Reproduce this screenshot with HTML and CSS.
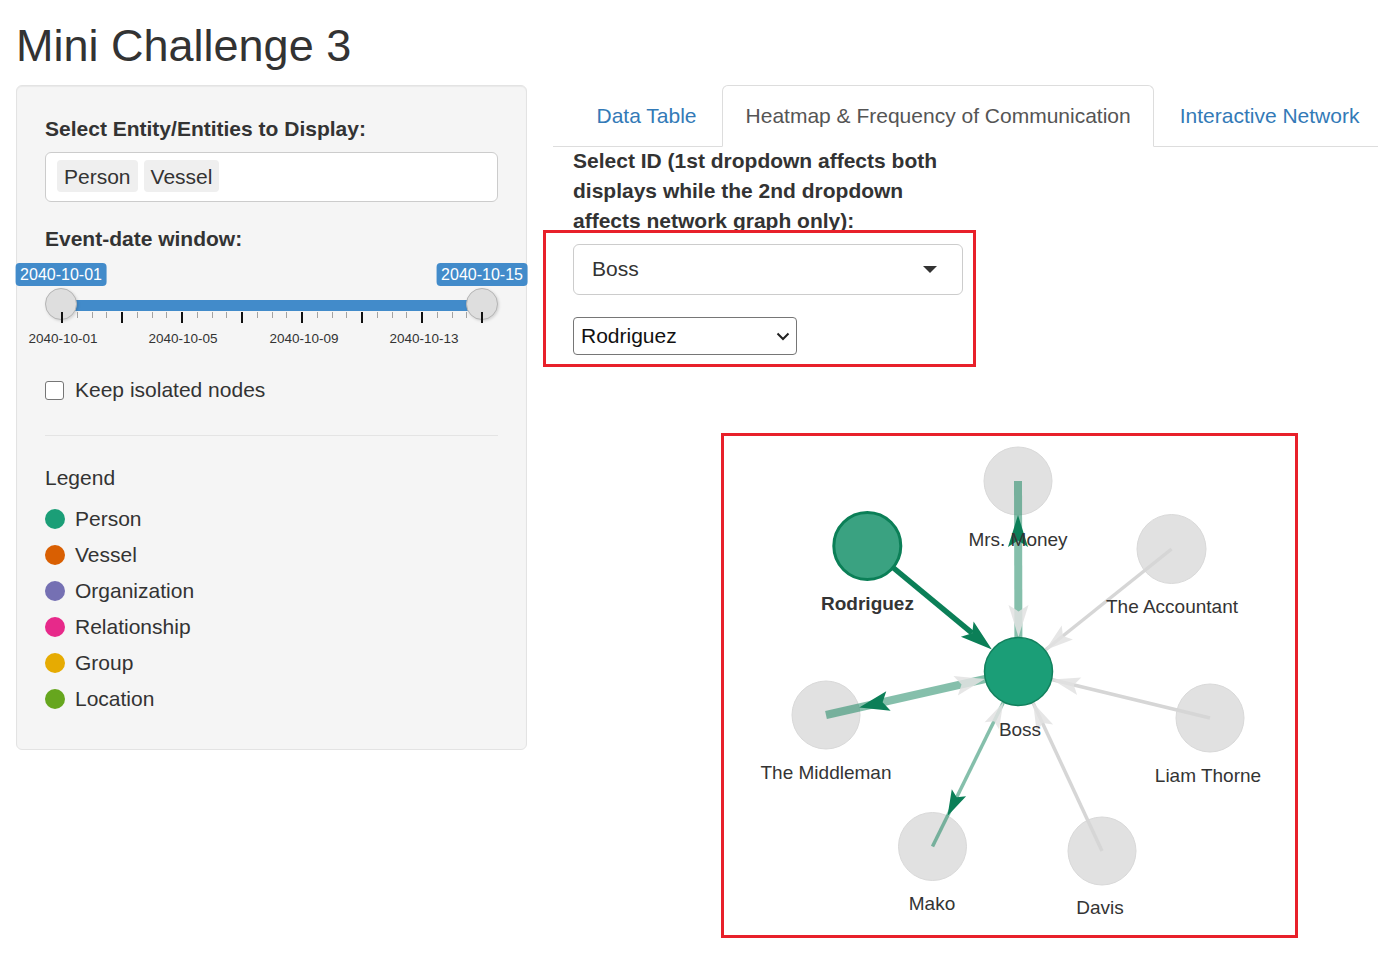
FILE: index.html
```html
<!DOCTYPE html>
<html lang="en">
<head>
<meta charset="utf-8">
<title>Mini Challenge 3</title>
<link rel="stylesheet" href="styles.css">
</head>
<body>
<div class="page">
  <h2 class="title">Mini Challenge 3</h2>
  <div class="layout">
    <aside class="well">
      <div class="form-group">
        <label class="control-label">Select Entity/Entities to Display:</label>
        <div class="multi-input"><span class="chip">Person</span><span class="chip">Vessel</span></div>
      </div>
      <div class="form-group slider-group">
        <label class="control-label">Event-date window:</label>
        <div class="slider">
          <div class="bar"></div>
          <span class="handle handle-from"></span>
          <span class="handle handle-to"></span>
          <span class="tip tip-from">2040-10-01</span>
          <span class="tip tip-to">2040-10-15</span>
          <div class="ticks">
            <i class="tick major"></i><i class="tick"></i><i class="tick"></i><i class="tick"></i>
            <i class="tick major"></i><i class="tick"></i><i class="tick"></i><i class="tick"></i>
            <i class="tick major"></i><i class="tick"></i><i class="tick"></i><i class="tick"></i>
            <i class="tick major"></i><i class="tick"></i><i class="tick"></i><i class="tick"></i>
            <i class="tick major"></i><i class="tick"></i><i class="tick"></i><i class="tick"></i>
            <i class="tick major"></i><i class="tick"></i><i class="tick"></i><i class="tick"></i>
            <i class="tick major"></i><i class="tick"></i><i class="tick"></i><i class="tick"></i>
            <i class="tick major"></i>
          </div>
          <span class="grid-label g1">2040-10-01</span>
          <span class="grid-label g2">2040-10-05</span>
          <span class="grid-label g3">2040-10-09</span>
          <span class="grid-label g4">2040-10-13</span>
        </div>
      </div>
      <label class="check"><span class="check-box"></span>Keep isolated nodes</label>
      <hr class="divider">
      <div class="legend-title">Legend</div>
      <ul class="legend">
        <li><span class="dot person"></span>Person</li>
        <li><span class="dot vessel"></span>Vessel</li>
        <li><span class="dot org"></span>Organization</li>
        <li><span class="dot rel"></span>Relationship</li>
        <li><span class="dot group"></span>Group</li>
        <li><span class="dot location"></span>Location</li>
      </ul>
    </aside>
    <main class="main">
      <ul class="tabs">
        <li><a>Data Table</a></li>
        <li class="active"><a>Heatmap &amp; Frequency of Communication</a></li>
        <li><a>Interactive Network</a></li>
      </ul>
      <div class="tab-content">
        <div class="id-group">
          <label class="control-label">Select ID (1st dropdown affects both displays while the 2nd dropdown affects network graph only):</label>
          <div class="selectize-single">Boss<span class="caret"></span></div>
        </div>
        <div class="native-select"><span>Rodriguez</span>
          <svg class="chev" width="14" height="9" viewBox="0 0 14 9"><polyline points="1.5,1.5 7,7 12.5,1.5" fill="none" stroke="#222" stroke-width="2"/></svg>
        </div>
        <div class="annot"></div>
        <div class="network">
          <svg width="571" height="499" viewBox="724 437 571 499">
            <g class="grey-nodes" fill="#e1e1e1" stroke="#d9d9d9" stroke-width="1">
              <circle cx="1018" cy="482" r="34"/>
              <circle cx="1171.5" cy="550" r="34.5"/>
              <circle cx="826" cy="716" r="34"/>
              <circle cx="1210" cy="719" r="34"/>
              <circle cx="932.5" cy="847.5" r="34"/>
              <circle cx="1102" cy="852" r="34"/>
            </g>
            <g stroke="#d6d6d6" stroke-width="3.5">
              <line x1="1171.5" y1="550" x2="1018.5" y2="672.5"/>
              <line x1="1210" y1="719" x2="1018.5" y2="672.5"/>
              <line x1="1102" y1="852" x2="1018.5" y2="672.5"/>
            </g>
            <g stroke="#0c7f58" stroke-opacity="0.5">
              <line x1="1018.5" y1="672.5" x2="1018" y2="482" stroke-width="8"/>
              <line x1="1018.5" y1="672.5" x2="826" y2="716" stroke-width="8"/>
              <line x1="1018.5" y1="672.5" x2="932.5" y2="847.5" stroke-width="3.5"/>
            </g>
            <g fill="#e2e2e2" fill-opacity="0.85">
              <polygon points="1018.5,638 1008.5,606 1018.5,612.4 1028.5,606"/>
              <polygon points="984.9,680.1 957.85,696.45 961.5,685.4 953.45,676.95"/>
              <polygon points="1003.3,703.5 999,730.3 994.1,722.2 984.6,723.3"/>
              <polygon points="1045.4,650.9 1061.7,626.4 1062.9,636.9 1072.9,640.4"/>
              <polygon points="1052,680.6 1081.3,678.5 1073.8,685.9 1077.1,695.9"/>
              <polygon points="1033.1,703.8 1053.1,725.4 1042.6,724.1 1036.7,733"/>
            </g>
            <g fill="#0c7f58">
              <polygon points="1018,516 1008,548 1018,541.6 1028,548"/>
              <polygon points="859.2,708.5 886.25,692.15 882.6,703.2 890.65,711.65"/>
              <polygon points="947.5,817 951.8,790.2 956.7,798.3 966.1,797.2"/>
            </g>
            <circle cx="1018.5" cy="672.5" r="34" fill="#1b9e77" stroke="#12805d" stroke-width="1.5"/>
            <line x1="867" y1="547" x2="972.2" y2="634.2" stroke="#0b7f57" stroke-width="5.5"/>
            <polygon points="991.9,650.5 960.9,637.8 972.2,634.2 973.6,622.4" fill="#0b7f57"/>
            <circle cx="867.3" cy="547" r="33.5" fill="#3aa281" stroke="#0b7f57" stroke-width="3"/>
            <g class="labels">
              <text x="1018" y="547">Mrs. Money</text>
              <text x="867.5" y="611" class="bold">Rodriguez</text>
              <text x="1172" y="614">The Accountant</text>
              <text x="1020" y="737">Boss</text>
              <text x="826" y="780">The Middleman</text>
              <text x="1208" y="783">Liam Thorne</text>
              <text x="932" y="911">Mako</text>
              <text x="1100" y="915">Davis</text>
            </g>
          </svg>
        </div>
      </div>
    </main>
  </div>
</div>
</body>
</html>
```
FILE: styles.css
```css
html, body {
  margin: 0;
  padding: 0;
  background: #fff;
}
body {
  font-family: "Liberation Sans", Arial, sans-serif;
  font-size: 21px;
  line-height: 30px;
  color: #333;
}
.page {
  padding-left: 16px;
}
.title {
  font-size: 45px;
  font-weight: normal;
  line-height: 49.5px;
  margin: 21px 0 14.5px 0;
  color: #333;
}
.layout {
  display: flex;
  align-items: flex-start;
}
.well {
  flex: none;
  width: 511px;
  box-sizing: border-box;
  background: #f5f5f5;
  border: 1px solid #e3e3e3;
  border-radius: 6px;
  padding: 28px 28px 29px;
  box-shadow: inset 0 1px 1px rgba(0, 0, 0, 0.05);
}
.control-label {
  display: block;
  font-weight: bold;
  margin-bottom: 8px;
}
.form-group {
  margin-bottom: 22px;
}
.multi-input {
  height: 50px;
  box-sizing: border-box;
  border: 1px solid #ccc;
  border-radius: 6px;
  background: #fff;
  padding: 7px 11px;
  display: flex;
  gap: 6px;
}
.chip {
  background: #efefef;
  border-radius: 4px;
  padding: 0 7px;
  height: 32px;
  line-height: 33px;
}
.slider-group {
  margin-bottom: 23px;
}
.slider {
  position: relative;
  height: 90px;
}
.bar {
  position: absolute;
  left: 16px;
  width: 421px;
  top: 38px;
  height: 11px;
  background: #428bca;
}
.handle {
  position: absolute;
  top: 26px;
  width: 32px;
  height: 32px;
  box-sizing: border-box;
  border-radius: 50%;
  background: #dedede;
  border: 1px solid #b5b5b5;
  box-shadow: 1px 1px 3px rgba(0, 0, 0, 0.15);
}
.handle-from { left: 0; }
.handle-to { left: 421px; }
.tip {
  position: absolute;
  top: 1px;
  transform: translateX(-50%);
  background: #428bca;
  color: #fff;
  font-size: 16px;
  line-height: 21px;
  padding: 1px 4.5px;
  border-radius: 4px;
  white-space: nowrap;
}
.tip-from { left: 16px; }
.tip-to { left: 437px; }
.ticks {
  position: absolute;
  left: 16px;
  width: 422px;
  top: 50px;
  display: flex;
  justify-content: space-between;
  align-items: flex-start;
}
.tick {
  display: block;
  width: 1px;
  height: 6px;
  background: #a3a3a3;
}
.tick.major {
  width: 2px;
  height: 11px;
  background: #111;
}
.grid-label {
  position: absolute;
  top: 69px;
  transform: translateX(-50%);
  font-size: 13.5px;
  line-height: 16px;
  color: #333;
  white-space: nowrap;
}
.g1 { left: 18px; }
.g2 { left: 138px; }
.g3 { left: 259px; }
.g4 { left: 379px; }
.check {
  display: flex;
  align-items: center;
  gap: 11px;
  height: 30px;
  font-weight: normal;
}
.check-box {
  width: 19px;
  height: 19px;
  box-sizing: border-box;
  border: 1px solid #767676;
  border-radius: 3px;
  background: #fff;
}
.divider {
  border: 0;
  border-top: 1px solid #e4e4e4;
  margin: 30px 0 27px 0;
  height: 0;
}
.legend-title {
  margin-bottom: 11px;
}
.legend {
  list-style: none;
  margin: 0;
  padding: 0;
}
.legend li {
  display: flex;
  align-items: center;
  gap: 10px;
  height: 30px;
  margin-bottom: 6px;
}
.dot {
  width: 20px;
  height: 20px;
  border-radius: 50%;
}
.person { background: #1b9e77; }
.vessel { background: #d95f02; }
.org { background: #7570b3; }
.rel { background: #e7298a; }
.group { background: #e6ab02; }
.location { background: #66a61e; }

.main {
  flex: 1;
  min-width: 0;
  margin-left: 26px;
}
.tabs {
  list-style: none;
  margin: 0;
  padding: 0 0 0 20px;
  display: flex;
  border-bottom: 1px solid #ddd;
}
.tabs li {
  margin-bottom: -1px;
  margin-right: 2px;
}
.tabs a {
  display: block;
  padding: 15px 22.5px;
  line-height: 30px;
  color: #337ab7;
  border: 1px solid transparent;
  border-radius: 6px 6px 0 0;
  white-space: nowrap;
}
.tabs .active a {
  color: #555;
  background: #fff;
  border-color: #ddd;
  border-bottom-color: transparent;
}
.tab-content {
  position: relative;
  padding-left: 20px;
  margin-top: -1px;
}
.id-group {
  width: 390px;
  margin-bottom: 22px;
}
.selectize-single {
  position: relative;
  height: 51px;
  box-sizing: border-box;
  border: 1px solid #ccc;
  border-radius: 6px;
  padding: 8.5px 18px 10.5px;
  background: #fff;
}
.caret {
  position: absolute;
  right: 25px;
  top: 21px;
  width: 0;
  height: 0;
  border-left: 7.5px solid transparent;
  border-right: 7.5px solid transparent;
  border-top: 7.5px solid #333;
}
.native-select {
  width: 224px;
  height: 38px;
  box-sizing: border-box;
  border: 1px solid #767676;
  border-radius: 4px;
  padding: 0 6px 0 7px;
  display: flex;
  align-items: center;
  justify-content: space-between;
  color: #111;
  background: #fff;
}
.chev {
  display: block;
  margin-top: 1px;
}
.annot {
  position: absolute;
  left: -10px;
  top: 84px;
  width: 433px;
  height: 137px;
  box-sizing: border-box;
  border: 3px solid #e8202a;
}
.network {
  margin-top: 78px;
  margin-left: 148px;
  width: 577px;
  height: 505px;
  box-sizing: border-box;
  border: 3px solid #e8202a;
}
.network svg {
  display: block;
}
.labels text {
  font-family: "Liberation Sans", Arial, sans-serif;
  font-size: 19px;
  fill: #343434;
  text-anchor: middle;
}
.labels text.bold {
  font-weight: bold;
}
```
